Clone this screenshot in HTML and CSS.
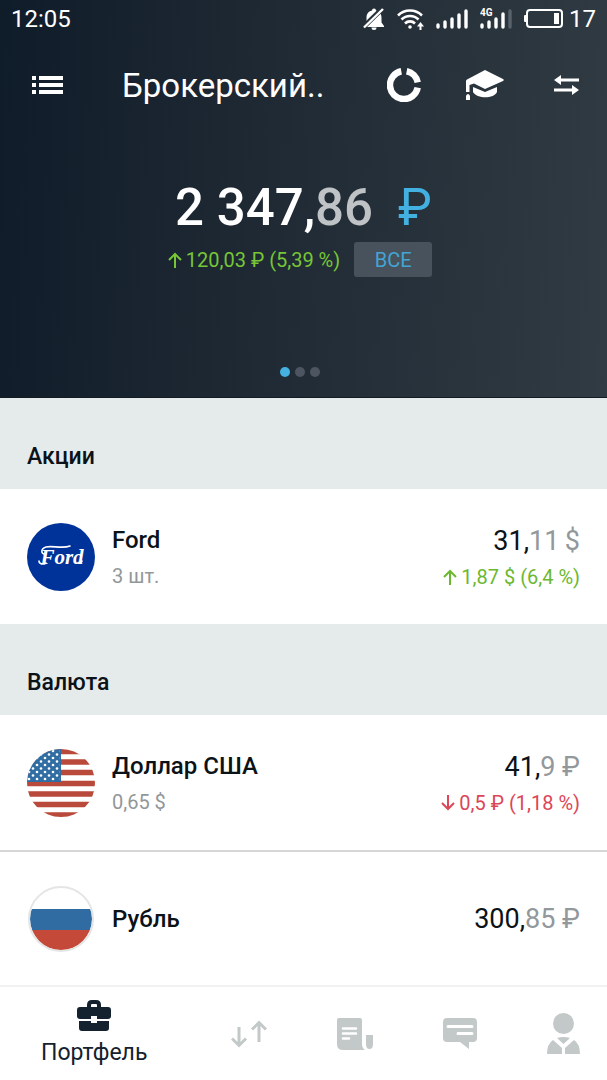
FILE: index.html
```html
<!DOCTYPE html>
<html lang="ru">
<head>
    <meta charset="UTF-8">
    <meta name="viewport" content="width=device-width, initial-scale=1.0">
    <title>Портфель</title>
    <link rel="stylesheet" href="styles.css">
</head>
<body>
    <header class="header">
        <div class="status-bar">
            <span class="clock">12:05</span>
            <svg class="status-icon" width="22" height="22" viewBox="0 0 22 22" fill="#fff">
                <path d="M11 0.500a2 2 0 0 0-2 2C5 3.500 3.500 6 3.500 10v4.500L1 18v1h20v-1l-2.500-3.500V10c0-4-1.500-6.500-5.500-7.500a2 2 0 0 0-2-2z"/>
                <path d="M8.500 19.500h5a2.500 2.500 0 0 1-5 0z"/>
                <path d="M0 19.500 20 0" stroke="#27313a" stroke-width="5"/>
                <path d="M1 19.500 20 1" stroke="#fff" stroke-width="2.400"/>
            </svg>
            <svg class="status-icon" width="27" height="22" viewBox="0 0 27 22" fill="none" stroke="#fff" stroke-width="2.600">
                <path d="M1 7.500a17 17 0 0 1 24 0M4.500 11.500a12 12 0 0 1 17 0M8 15.500a7 7 0 0 1 10 0"/>
                <circle cx="13" cy="19" r="1.800" fill="#fff" stroke="none"/>
                <path d="M23.500 22v-5" stroke-width="2"/>
                <path d="M20 18.500 23.500 14l3.500 4.500z" fill="#fff" stroke="none"/>
            </svg>
            <svg class="status-icon" width="32" height="20" viewBox="0 0 32 20" stroke="#fff" stroke-width="3.400" stroke-linecap="round">
                <path d="M2 18v-2M9 18v-5M16 18v-8M23 18V6M30 18V2"/>
            </svg>
            <svg class="status-icon" width="32" height="22" viewBox="0 0 32 22" stroke="#fff" stroke-width="3.400" stroke-linecap="round">
                <path d="M2 19v-2M9 19v-5M16 19v-8M23 19V6"/>
                <path d="M30 19V3" stroke="#59626b"/>
                <text class="network" x="0" y="8">4G</text>
            </svg>
            <svg class="status-icon" width="39" height="20" viewBox="0 0 39 20">
                <rect x="3" y="1" width="35" height="17" rx="3" fill="none" stroke="#fff" stroke-width="2"/>
                <rect x="0" y="6" width="3" height="7" rx="1" fill="#fff"/>
                <rect x="30" y="4" width="5" height="11" fill="#fff"/>
            </svg>
            <span>17</span>
        </div>

        <div class="toolbar">
            <button class="icon-button" aria-label="Меню">
                <svg width="31" height="18" viewBox="0 0 31 18" fill="#fff">
                    <path d="M0 0h4v4H0zM7 0h24v4H7zM0 7h4v4H0zM7 7h24v4H7zM0 14h4v4H0zM7 14h24v4H7z"/>
                </svg>
            </button>
            <h1 class="title">Брокерский..</h1>
            <button class="icon-button" aria-label="Аналитика">
                <svg width="34" height="34" viewBox="0 0 34 34" fill="none" stroke="#fff" stroke-width="6.500">
                    <path d="M19.700 3.300A14 14 0 0 1 30.700 14.300"/>
                    <path d="M30.700 19.700A14 14 0 1 1 14.300 3.300"/>
                </svg>
            </button>
            <button class="icon-button" aria-label="Обучение">
                <svg width="38" height="32" viewBox="0 0 38 32" fill="#fff">
                    <path d="M19 1 37 10q1.500 1 0 2L19 20 8 14.500 3.500 16v7H0V12q0-1 1-1.500z"/>
                    <path d="M7 18 19 23l12-5v5c-3 7-20 7-24 0z"/>
                    <path d="M0 26.500q2-3 4 0V31H0z"/>
                </svg>
            </button>
            <button class="icon-button" aria-label="Перевод">
                <svg width="25" height="22" viewBox="0 0 25 22" fill="#fff">
                    <path d="M0 6 7 1v3.500h18v3H7V11zM25 16l-7-5v3.500H0v3h18V21z"/>
                </svg>
            </button>
        </div>

        <div class="balance">2 347,<span class="cents">86</span><span class="currency">₽</span></div>
        <div class="profit">
            <span class="change up">
                <svg class="arrow" width="14" height="16" viewBox="0 0 14 16"><path d="M7 16V2M1 8l6-6 6 6"/></svg>
                120,03 ₽ (5,39 %)
            </span>
            <button class="period">ВСЕ</button>
        </div>
        <div class="dots">
            <span class="dot active"></span>
            <span class="dot"></span>
            <span class="dot"></span>
        </div>
    </header>

    <main>
        <h2 class="section-title">Акции</h2>
        <div class="row">
            <svg class="logo" viewBox="0 0 68 68">
                <circle cx="34" cy="34" r="34" fill="#003399"/>
                <text class="ford" x="35" y="41">Ford</text>
                <path d="M19 31c-5 1-6-5 0-7 6-1.500 17 2 24-1" fill="none" stroke="#fff" stroke-width="1.600" stroke-linecap="round"/>
                <path d="M19 40c-3 2-7 1-7-2M51 40q3 1 4-2" fill="none" stroke="#fff" stroke-width="1.600" stroke-linecap="round"/>
            </svg>
            <div class="info">
                <div class="name">Ford</div>
                <div class="count">3 шт.</div>
            </div>
            <div class="values">
                <div class="price">31,<span class="fraction">11&thinsp;$</span></div>
                <div class="change up">
                    <svg class="arrow" width="14" height="16" viewBox="0 0 14 16"><path d="M7 16V2M1 8l6-6 6 6"/></svg>
                    1,87 $ (6,4 %)
                </div>
            </div>
        </div>

        <h2 class="section-title">Валюта</h2>
        <div class="row">
            <svg class="logo" viewBox="0 0 68 68">
                <defs>
                    <clipPath id="usa"><circle cx="34" cy="34" r="34"/></clipPath>
                    <pattern id="stars" width="8" height="7" patternUnits="userSpaceOnUse">
                        <circle cx="2" cy="2" r="1.300" fill="#fff"/>
                        <circle cx="6" cy="5.500" r="1.300" fill="#fff"/>
                    </pattern>
                </defs>
                <g clip-path="url(#usa)">
                    <rect width="68" height="68" fill="#fff"/>
                    <path d="M0 2.500h68M0 13h68M0 23.500h68M0 34.500h68M0 45h68M0 55.500h68M0 66h68" stroke="#b94a3b" stroke-width="5.400"/>
                    <rect width="34" height="33" fill="#2f6da3"/>
                    <rect width="33" height="32" fill="url(#stars)"/>
                </g>
            </svg>
            <div class="info">
                <div class="name">Доллар США</div>
                <div class="count">0,65 $</div>
            </div>
            <div class="values">
                <div class="price">41,<span class="fraction">9 ₽</span></div>
                <div class="change down">
                    <svg class="arrow" width="14" height="16" viewBox="0 0 14 16"><path d="M7 0v14M1 8l6 6 6-6"/></svg>
                    0,5 ₽ (1,18 %)
                </div>
            </div>
        </div>
        <div class="row">
            <svg class="logo" viewBox="0 0 68 68">
                <defs>
                    <clipPath id="russia"><circle cx="34" cy="34" r="31"/></clipPath>
                </defs>
                <g clip-path="url(#russia)">
                    <rect width="68" height="68" fill="#fff"/>
                    <rect y="24" width="68" height="21" fill="#306ba1"/>
                    <rect y="45" width="68" height="23" fill="#c54938"/>
                </g>
                <circle cx="34" cy="34" r="32" fill="none" stroke="#e4e5e5" stroke-width="2"/>
            </svg>
            <div class="info">
                <div class="name">Рубль</div>
            </div>
            <div class="values">
                <div class="price">300,<span class="fraction">85 ₽</span></div>
            </div>
        </div>
    </main>

    <nav class="tabs">
        <a class="tab active" href="#portfolio">
            <svg width="34" height="31" viewBox="0 0 34 31" fill="#14212e">
                <path d="M10 8V5q0-5 5-5h4q5 0 5 5v3h-4V5q0-1-1-1h-4q-1 0-1 1v3z"/>
                <path d="M3 7h28q3 0 3 3v6q0 3-3 3H20v-3h-6v3H3q-3 0-3-3v-6q0-3 3-3zM2 21h12v2h6v-2h12v7q0 3-3 3H5q-3 0-3-3z"/>
            </svg>
            Портфель
        </a>
        <a class="tab" href="#trades" aria-label="Сделки">
            <svg width="36" height="28" viewBox="0 0 36 28" fill="none" stroke="#c3c8c8" stroke-width="3">
                <path d="M8 7v18M1 18.500l7 7 7-7M28 22V3M21 9.500l7-7 7 7"/>
            </svg>
        </a>
        <a class="tab" href="#news" aria-label="Новости">
            <svg width="36" height="32" viewBox="0 0 36 32" fill="#c3c8c8">
                <path d="M2 0h21q2 0 2 2v24q0 4 3 6H6q-6 0-6-6V2q0-2 2-2z"/>
                <path d="M29 17h7v9q0 5-3.500 5T29 26z"/>
                <path d="M6 10.500h13M6 15.500h13M6 20.500h6" stroke="#fff" stroke-width="2.600" stroke-linecap="round"/>
            </svg>
        </a>
        <a class="tab" href="#chat" aria-label="Чат">
            <svg width="34" height="31" viewBox="0 0 34 31" fill="#c3c8c8">
                <path d="M4 0h26q4 0 4 4v16q0 4-4 4h-4v7l-9-7H4q-4 0-4-4V4q0-4 4-4z"/>
                <path d="M5 8.500h24M15 15.500h14" stroke="#fff" stroke-width="3" stroke-linecap="round"/>
            </svg>
        </a>
        <a class="tab" href="#profile" aria-label="Профиль">
            <svg width="33" height="41" viewBox="0 0 33 41" fill="#c3c8c8">
                <circle cx="16.500" cy="10.500" r="10.500"/>
                <path d="M0 41q0-10 6-14l9 8v6zM33 41q0-10-6-14l-9 8v6zM10 25q6.500-2 13 0l-6.500 6z"/>
            </svg>
        </a>
    </nav>
</body>
</html>
```
FILE: styles.css
```css
* {
    box-sizing: border-box;
}

body {
    margin: 0;
    min-height: 100vh;
    display: flex;
    flex-direction: column;
    font-family: Roboto, "Noto Sans", sans-serif;
    font-size: 20px;
    color: #0b1218;
    background: #fff;
}

h1, h2 {
    margin: 0;
}

button {
    padding: 0;
    border: none;
    background: none;
    font-family: inherit;
}

.header {
    padding-bottom: 20px;
    border-bottom: 1px solid #141b22;
    color: #fff;
    background: linear-gradient(94deg, #0f1c29, #222c36 52%, #303b43);
}

.status-bar {
    display: flex;
    align-items: center;
    gap: 12px;
    height: 38px;
    padding: 0 11px;
    font-size: 24px;
}

.status-icon {
    flex: none;
}

.status-bar span:last-child {
    margin-left: -6px;
}

.clock {
    flex: 1;
}

.network {
    fill: #fff;
    stroke: none;
    font-size: 10px;
    font-weight: bold;
}

.toolbar {
    display: flex;
    align-items: center;
    gap: 43px;
    height: 94px;
    padding: 0 22px 0 28px;
}

.icon-button {
    flex: none;
    width: 38px;
}

.icon-button svg {
    display: block;
    margin: 0 auto;
}

.title {
    flex: 1;
    padding-left: 13px;
    font-size: 33px;
    font-weight: 400;
    white-space: nowrap;
}

.balance {
    margin-top: 46px;
    text-align: center;
    font-size: 51px;
    line-height: 60px;
    font-weight: 500;
}

.cents {
    color: #bfc3c6;
}

.currency {
    margin-left: 25px;
    color: #42b0e0;
    font-weight: 400;
}

.profit {
    display: flex;
    justify-content: center;
    align-items: center;
    gap: 14px;
    margin-top: 4px;
    padding-right: 7px;
}

.change {
    display: flex;
    align-items: center;
    justify-content: flex-end;
    gap: 4px;
    line-height: 24px;
}

.arrow {
    fill: none;
    stroke: currentColor;
    stroke-width: 2;
}

.up {
    color: #6cb82f;
}

.down {
    color: #dc4658;
}

.header .up {
    color: #76c636;
}

.period {
    width: 78px;
    height: 35px;
    border-radius: 3px;
    background: #48525c;
    color: #42a5d5;
    font-size: 20px;
}

.dots {
    display: flex;
    justify-content: center;
    gap: 5px;
    margin-top: 90px;
    padding-right: 7px;
}

.dot {
    width: 10px;
    height: 10px;
    border-radius: 50%;
    background: #4d5561;
}

.dot.active {
    background: #45b1df;
}

.section-title {
    padding: 45px 27px 18px;
    background: #e5eaeb;
    font-size: 23px;
    line-height: 28px;
    font-weight: 500;
}

.row {
    display: flex;
    align-items: center;
    gap: 17px;
    height: 135px;
    padding: 0 27px;
}

.row + .row {
    border-top: 2px solid #d5d6d6;
}

.logo {
    flex: none;
    width: 68px;
    height: 68px;
}

.ford {
    fill: #fff;
    text-anchor: middle;
    font-family: "Liberation Serif", serif;
    font-size: 21px;
    font-style: italic;
    font-weight: bold;
}

.info {
    flex: 1;
}

.name {
    font-size: 24px;
    line-height: 28px;
    font-weight: 500;
}

.count {
    margin-top: 10px;
    color: #929799;
    line-height: 24px;
}

.values {
    text-align: right;
}

.price {
    font-size: 27px;
    line-height: 32px;
}

.fraction {
    color: #92989b;
}

.values .change {
    margin-top: 8px;
}

.tabs {
    flex: 1;
    display: flex;
    align-items: center;
    justify-content: space-between;
    padding: 0 27px 0 41px;
    border-top: 2px solid #f1f1f1;
}

.tab {
    color: #14212e;
    font-size: 23px;
    line-height: 28px;
    text-decoration: none;
}

.tab svg {
    display: block;
}

.tab.active {
    display: flex;
    flex-direction: column;
    align-items: center;
    gap: 8px;
    margin-right: 14px;
}
```
